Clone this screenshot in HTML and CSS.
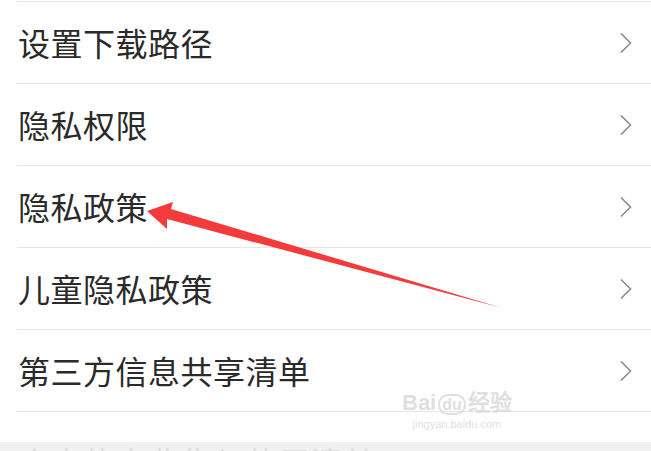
FILE: index.html
```html
<!DOCTYPE html>
<html lang="zh-CN">
<head>
  <meta charset="UTF-8" />
  <meta name="viewport" content="width=device-width, initial-scale=1.0"/>
  <title>设置</title>
  <link rel="stylesheet" href="styles.css">
</head>
<body>
  <div class="list">
    <div class="row"><span class="label">设置下载路径</span><span class="chev"><svg width="14" height="22" viewBox="0 0 14 22"><path d="M2 1.5 L11.5 11 L2 20.5" fill="none" stroke="#8a8a8a" stroke-width="1.6"/></svg></span></div>
    <div class="row"><span class="label">隐私权限</span><span class="chev"><svg width="14" height="22" viewBox="0 0 14 22"><path d="M2 1.5 L11.5 11 L2 20.5" fill="none" stroke="#8a8a8a" stroke-width="1.6"/></svg></span></div>
    <div class="row"><span class="label">隐私政策</span><span class="chev"><svg width="14" height="22" viewBox="0 0 14 22"><path d="M2 1.5 L11.5 11 L2 20.5" fill="none" stroke="#8a8a8a" stroke-width="1.6"/></svg></span></div>
    <div class="row"><span class="label">儿童隐私政策</span><span class="chev"><svg width="14" height="22" viewBox="0 0 14 22"><path d="M2 1.5 L11.5 11 L2 20.5" fill="none" stroke="#8a8a8a" stroke-width="1.6"/></svg></span></div>
    <div class="row"><span class="label">第三方信息共享清单</span><span class="chev"><svg width="14" height="22" viewBox="0 0 14 22"><path d="M2 1.5 L11.5 11 L2 20.5" fill="none" stroke="#8a8a8a" stroke-width="1.6"/></svg></span></div>
    <div class="row row-cut"><span class="label">个人信息收集与使用清单</span></div>
  </div>

  <div class="bottom-bar"></div>

  <!-- annotation arrow -->
  <svg class="arrow" width="651" height="451" viewBox="0 0 651 451">
    <polygon points="147,211 173,202 171,209 502,308 167,219 167,229" fill="#f43b3b"/>
  </svg>

  <div class="watermark">
    <div class="wm-top">Bai<span class="wm-du">du</span>经验</div>
    <div class="wm-bottom">jingyan.baidu.com</div>
  </div>
</body>
</html>
```

FILE: styles.css
```css
body {
  margin: 0;
  padding-top: 1px;
  background: #ffffff;
  font-family: "Noto Sans CJK SC", "Noto Sans", sans-serif;
  color: #2a2a2a;
  width: 651px;
  height: 451px;
  overflow: hidden;
  position: relative;
}

.list {
  border-top: 1px solid #e6e6e6;
  margin-left: 17px;
}

.row {
  height: 81px;
  border-bottom: 1px solid #e6e6e6;
  display: flex;
  align-items: center;
  justify-content: space-between;
  padding-left: 1px;
  padding-right: 18px;
}

.label {
  font-size: 32px;
  line-height: 1;
  letter-spacing: 0.5px;
  position: relative;
  top: -1px;
}

.chev {
  display: flex;
  align-items: center;
}

.row-cut {
  border-bottom: none;
  align-items: flex-start;
  padding-top: 34px;
  height: 5px;
  overflow: hidden;
}

.bottom-bar {
  position: absolute;
  left: 0;
  right: 0;
  bottom: 0;
  height: 10px;
  background: rgba(240, 240, 240, 0.9);
}

.arrow {
  position: absolute;
  left: 0;
  top: 0;
}

.watermark {
  position: absolute;
  left: 402px;
  top: 392px;
  color: rgba(215, 215, 215, 0.8);
  font-family: "Liberation Sans", sans-serif;
  text-align: center;
}

.wm-top {
  font-size: 22px;
  font-weight: bold;
  line-height: 22px;
}

.wm-du {
  border: 2px solid rgba(215, 215, 215, 0.8);
  border-radius: 10px;
  padding: 0 2px;
  margin: 0 2px;
  font-size: 16px;
}

.wm-bottom {
  font-size: 11px;
  margin-top: 2px;
}
```
